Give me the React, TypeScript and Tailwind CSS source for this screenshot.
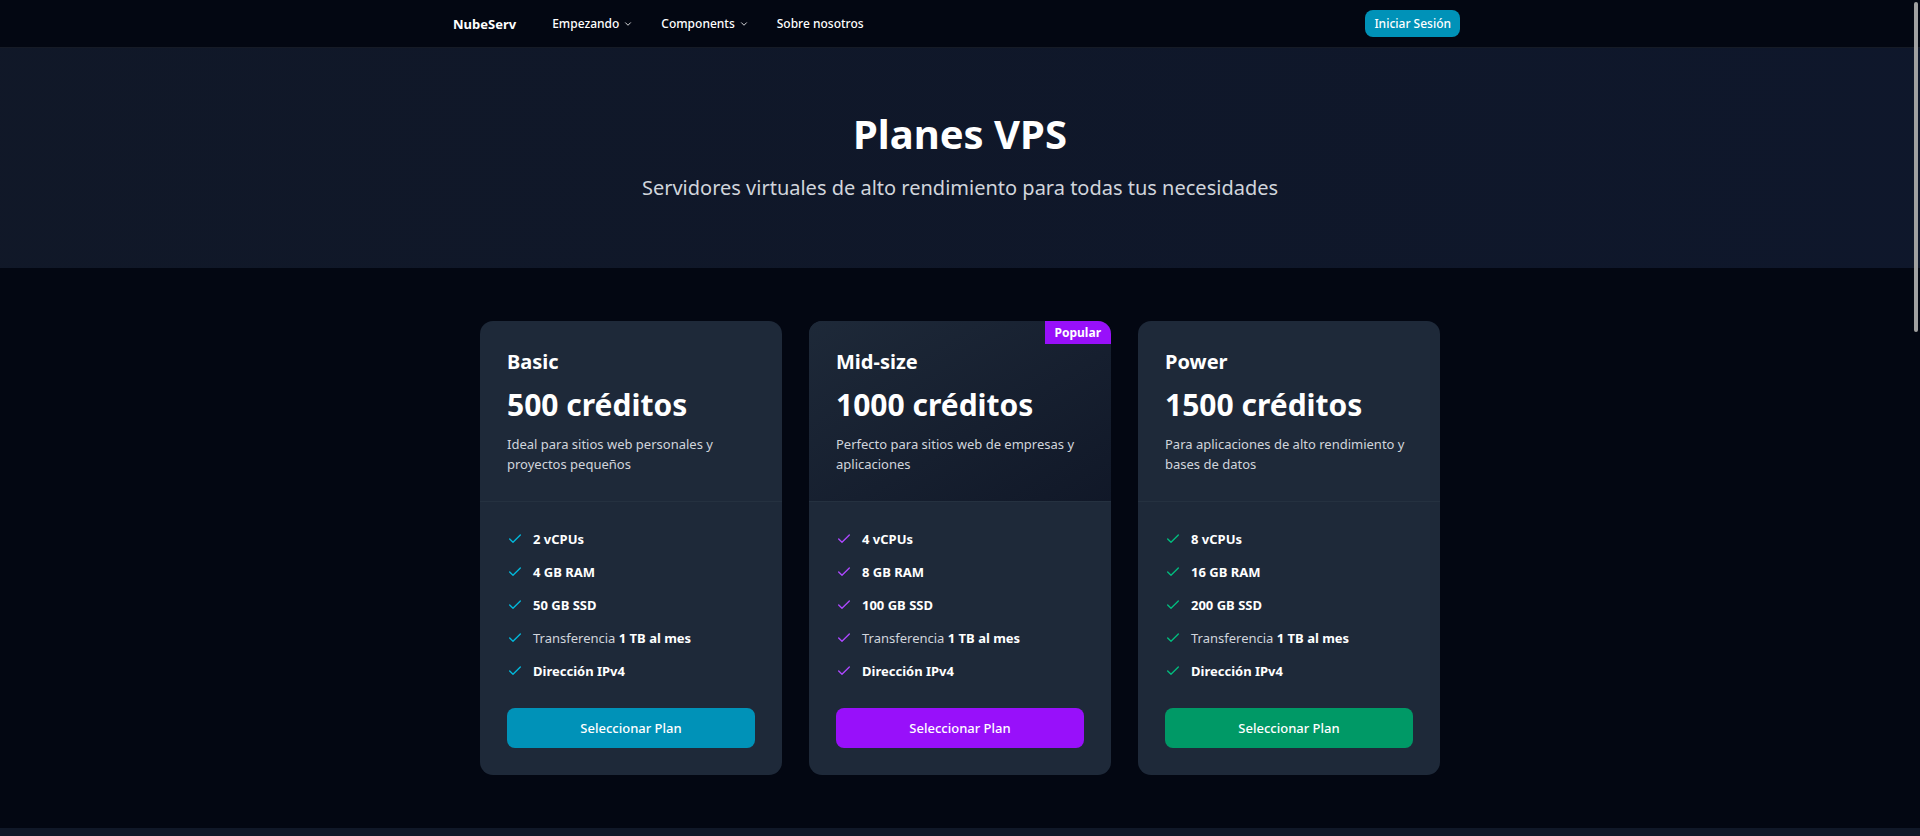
import React from "react";
import { Check, ChevronDown } from "lucide-react";

type Plan = {
  name: string;
  price: string;
  description: string;
  specs: string[];
  check: string;
  button: string;
  popular?: boolean;
};

const plans: Plan[] = [
  {
    name: "Basic",
    price: "500 créditos",
    description: "Ideal para sitios web personales y proyectos pequeños",
    specs: ["2 vCPUs", "4 GB RAM", "50 GB SSD"],
    check: "text-cyan-500",
    button: "bg-cyan-600 hover:bg-cyan-700",
  },
  {
    name: "Mid-size",
    price: "1000 créditos",
    description: "Perfecto para sitios web de empresas y aplicaciones",
    specs: ["4 vCPUs", "8 GB RAM", "100 GB SSD"],
    check: "text-purple-500",
    button: "bg-purple-600 hover:bg-purple-700",
    popular: true,
  },
  {
    name: "Power",
    price: "1500 créditos",
    description: "Para aplicaciones de alto rendimiento y bases de datos",
    specs: ["8 vCPUs", "16 GB RAM", "200 GB SSD"],
    check: "text-emerald-500",
    button: "bg-emerald-600 hover:bg-emerald-700",
  },
];

function Feature({ check, children }: { check: string; children: React.ReactNode }) {
  return (
    <li className="flex items-center gap-[10px]">
      <Check aria-hidden="true" strokeWidth={2} className={`size-4 shrink-0 ${check}`} />
      <span>{children}</span>
    </li>
  );
}

function PlanCard({ plan }: { plan: Plan }) {
  return (
    <article className="relative overflow-hidden rounded-[13px] bg-gray-800">
      <header
        className={`border-b border-[#253140] p-[27px] ${
          plan.popular ? "bg-linear-to-br from-gray-800 to-gray-900" : ""
        }`}
      >
        <h2 className="text-[20px] leading-[27px] font-bold">{plan.name}</h2>
        <p className="mt-[13px] text-[30px] leading-[33px] font-bold">{plan.price}</p>
        <p className="mt-[13px] text-[13px] leading-5 text-gray-300">{plan.description}</p>
      </header>
      {plan.popular && (
        <span className="absolute top-0 right-0 bg-purple-600 px-[10px] py-[3px] text-[12px] leading-[17px] font-bold">
          Popular
        </span>
      )}
      <div className="p-[27px]">
        <ul className="flex flex-col gap-[13px] text-[13px] leading-5 text-gray-300">
          {plan.specs.map((spec) => (
            <Feature key={spec} check={plan.check}>
              <strong className="font-bold text-white">{spec}</strong>
            </Feature>
          ))}
          <Feature check={plan.check}>
            Transferencia <strong className="font-bold text-white">1 TB al mes</strong>
          </Feature>
          <Feature check={plan.check}>
            <strong className="font-bold text-white">Dirección IPv4</strong>
          </Feature>
        </ul>
        <button
          type="button"
          className={`mt-[27px] h-10 w-full rounded-lg text-[13px] leading-5 font-medium ${plan.button}`}
        >
          Seleccionar Plan
        </button>
      </div>
    </article>
  );
}

export default function App() {
  return (
    <div className="flex min-h-screen flex-col bg-gray-950 font-['Noto_Sans',sans-serif] text-white">
      <header className="border-b border-[#161b26]">
        <div className="mx-auto flex h-[47px] max-w-[1066px] items-center justify-between pr-[33px] pl-[26px]">
          <div className="flex items-center gap-9">
            <a href="#" className="text-[13px] leading-5 font-bold">
              NubeServ
            </a>
            <nav className="flex items-center gap-7 text-[12px] leading-[17px] font-medium">
              <button type="button" className="flex items-center gap-1">
                Empezando
                <ChevronDown aria-hidden="true" className="size-[10px]" />
              </button>
              <button type="button" className="flex items-center gap-1">
                Components
                <ChevronDown aria-hidden="true" className="size-[10px]" />
              </button>
              <a href="#">Sobre nosotros</a>
            </nav>
          </div>
          <button
            type="button"
            className="h-[27px] rounded-lg bg-cyan-600 px-[9px] text-[12px] leading-[17px] font-medium"
          >
            Iniciar Sesión
          </button>
        </div>
      </header>

      <main className="flex grow flex-col">
        <section className="bg-linear-to-r from-gray-900 to-slate-900 px-4 pt-[66px] pb-[67px] text-center">
          <h1 className="text-[40px] leading-10 font-bold">Planes VPS</h1>
          <p className="mt-5 text-[20px] leading-[27px] text-gray-300">
            Servidores virtuales de alto rendimiento para todas tus necesidades
          </p>
        </section>

        <section className="mx-auto w-full max-w-[992px] px-4 py-[53px]">
          <div className="grid gap-[27px] md:grid-cols-3">
            {plans.map((plan) => (
              <PlanCard key={plan.name} plan={plan} />
            ))}
          </div>
        </section>

        <section className="grow bg-gray-900" />
      </main>

      <div aria-hidden="true" className="fixed top-[2px] right-[2px] h-[330px] w-1 rounded-full bg-[#a0a0a0]" />
    </div>
  );
}
